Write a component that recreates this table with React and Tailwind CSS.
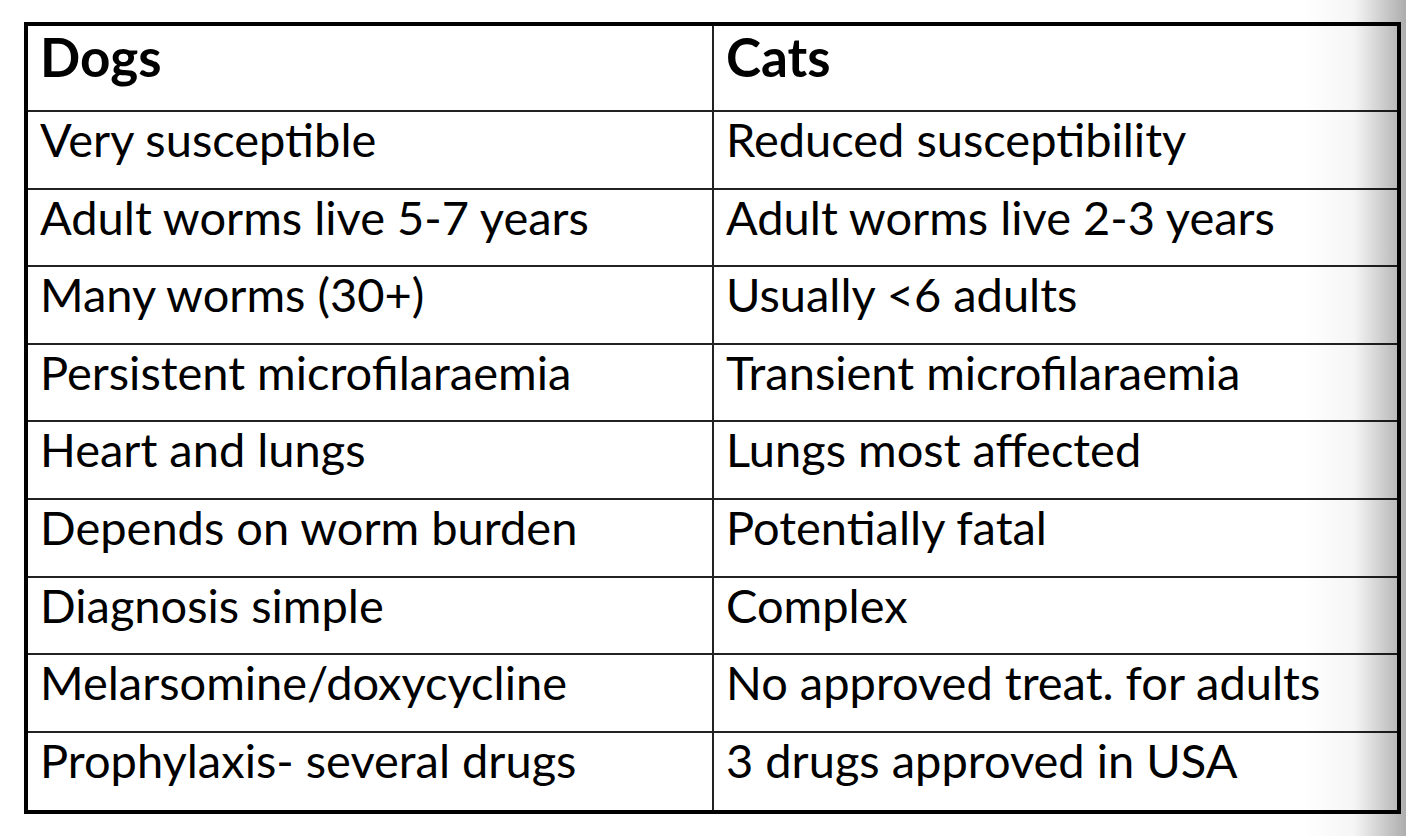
import React from "react";

const rows = [
  ["Very susceptible", "Reduced susceptibility"],
  ["Adult worms live 5-7 years", "Adult worms live 2-3 years"],
  ["Many worms (30+)", "Usually <6 adults"],
  ["Persistent microfilaraemia", "Transient microfilaraemia"],
  ["Heart and lungs", "Lungs most affected"],
  ["Depends on worm burden", "Potentially fatal"],
  ["Diagnosis simple", "Complex"],
  ["Melarsomine/doxycycline", "No approved treat. for adults"],
  ["Prophylaxis- several drugs", "3 drugs approved in USA"],
];

export default function App() {
  return (
    <div
      className="relative w-[1406px] h-[836px] bg-white overflow-hidden pt-[22px] pl-[24px]"
      style={{ fontFamily: "Lato, 'Open Sans', sans-serif" }}
    >
      <div className="w-[1377px] border-4 border-black text-black">
        <div className="flex h-[86px] border-b-2 border-[#222]">
          <div className="w-[686px] border-r-2 border-[#222] pl-[12px] pt-[3px] text-[53px] font-bold leading-[56px]">
            Dogs
          </div>
          <div className="flex-1 pl-[12px] pt-[3px] text-[53px] font-bold leading-[56px]">
            Cats
          </div>
        </div>
        {rows.map(([a, b], i) => (
          <div
            key={i}
            className={`flex h-[77.6px] ${i < rows.length - 1 ? "border-b-2 border-[#222]" : ""}`}
          >
            <div className="w-[686px] border-r-2 border-[#222] pl-[12px] pt-[3px] text-[47px] leading-[48px] whitespace-nowrap">
              {a}
            </div>
            <div className="flex-1 pl-[12px] pt-[3px] text-[47px] leading-[48px] whitespace-nowrap">
              {b}
            </div>
          </div>
        ))}
      </div>
      <div className="pointer-events-none absolute top-0 right-0 h-full w-[104px] bg-gradient-to-r from-transparent via-[rgba(0,0,0,0.04)] to-[rgba(0,0,0,0.32)]" />
    </div>
  );
}
